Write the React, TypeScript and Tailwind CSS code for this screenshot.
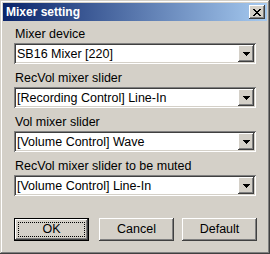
import React from "react";

const raised =
  "shadow-[inset_-1px_-1px_#404040,inset_1px_1px_#ffffff,inset_-2px_-2px_#808080,inset_2px_2px_#d4d0c8]";

function Combo({ value }: { value: string }) {
  return (
    <div className="h-[21px] w-[242px] bg-white flex items-center shadow-[inset_1px_1px_#808080,inset_-1px_-1px_#ffffff,inset_2px_2px_#404040,inset_-2px_-2px_#d4d0c8] p-[2px]">
      <div className="flex-1 pl-[1px] text-[12.5px] leading-[14px] text-black whitespace-nowrap overflow-hidden">
        {value}
      </div>
      <div className={`w-[16px] h-[17px] bg-[#d4d0c8] flex items-center justify-center ${raised}`}>
        <svg width="7" height="4" viewBox="0 0 7 4">
          <path d="M0 0h7v1h-1v1h-1v1h-1v1h-1v-1h-1v-1h-1v-1h-1z" fill="#000" />
        </svg>
      </div>
    </div>
  );
}

function Field({ label, value }: { label: string; value: string }) {
  return (
    <div className="flex flex-col">
      <div className="h-[14px] text-[12.5px] leading-[14px] text-black pl-[1px]">{label}</div>
      <div className="mt-[2px]">
        <Combo value={value} />
      </div>
    </div>
  );
}

export default function App() {
  return (
    <div
      className="w-[270px] h-[254px] bg-[#d4d0c8] relative shadow-[inset_-1px_-1px_#404040,inset_1px_1px_#d4d0c8,inset_-2px_-2px_#808080,inset_2px_2px_#ffffff] p-[3px] flex flex-col"
      style={{ fontFamily: '"Liberation Sans", Arial, sans-serif' }}
    >
      <div className="h-[18px] bg-[linear-gradient(to_right,#0a246a,#a6caf0)] flex items-center pl-[3px] pr-[2px]">
        <div className="flex-1 text-white font-bold text-[12px] leading-[14px]">
          Mixer setting
        </div>
        <div className={`w-[16px] h-[14px] bg-[#d4d0c8] flex items-center justify-center ${raised}`}>
          <svg width="8" height="7" viewBox="0 0 8 7">
            <path d="M0 0h2v1h1v1h2v-1h1v-1h2v1h-1v1h-1v1h-1v1h1v1h1v1h1v1h-2v-1h-1v-1h-2v1h-1v1h-2v-1h1v-1h1v-1h1v-1h-1v-1h-1v-1h-1z" fill="#000" />
          </svg>
        </div>
      </div>
      <div className="flex flex-col pl-[11px] pt-[6px] gap-[7px]">
        <Field label="Mixer device" value="SB16 Mixer [220]" />
        <Field label="RecVol mixer slider" value="[Recording Control] Line-In" />
        <Field label="Vol mixer slider" value="[Volume Control] Wave" />
        <Field label="RecVol mixer slider to be muted" value="[Volume Control] Line-In" />
      </div>
      <div className="flex pl-[11px] mt-[22px] gap-[10px]">
        <div className="w-[75px] h-[23px] border border-black">
          <div className={`w-full h-full flex items-center justify-center ${raised} p-[3px]`}>
            <div className="w-full h-full border border-dotted border-black flex items-center justify-center text-[12.5px] text-black">
              OK
            </div>
          </div>
        </div>
        <div className={`w-[75px] h-[23px] flex items-center justify-center text-[12.5px] text-black ${raised}`}>
          Cancel
        </div>
        <div className={`w-[75px] h-[23px] flex items-center justify-center text-[12.5px] text-black ${raised} -ml-[2px]`}>
          Default
        </div>
      </div>
    </div>
  );
}
